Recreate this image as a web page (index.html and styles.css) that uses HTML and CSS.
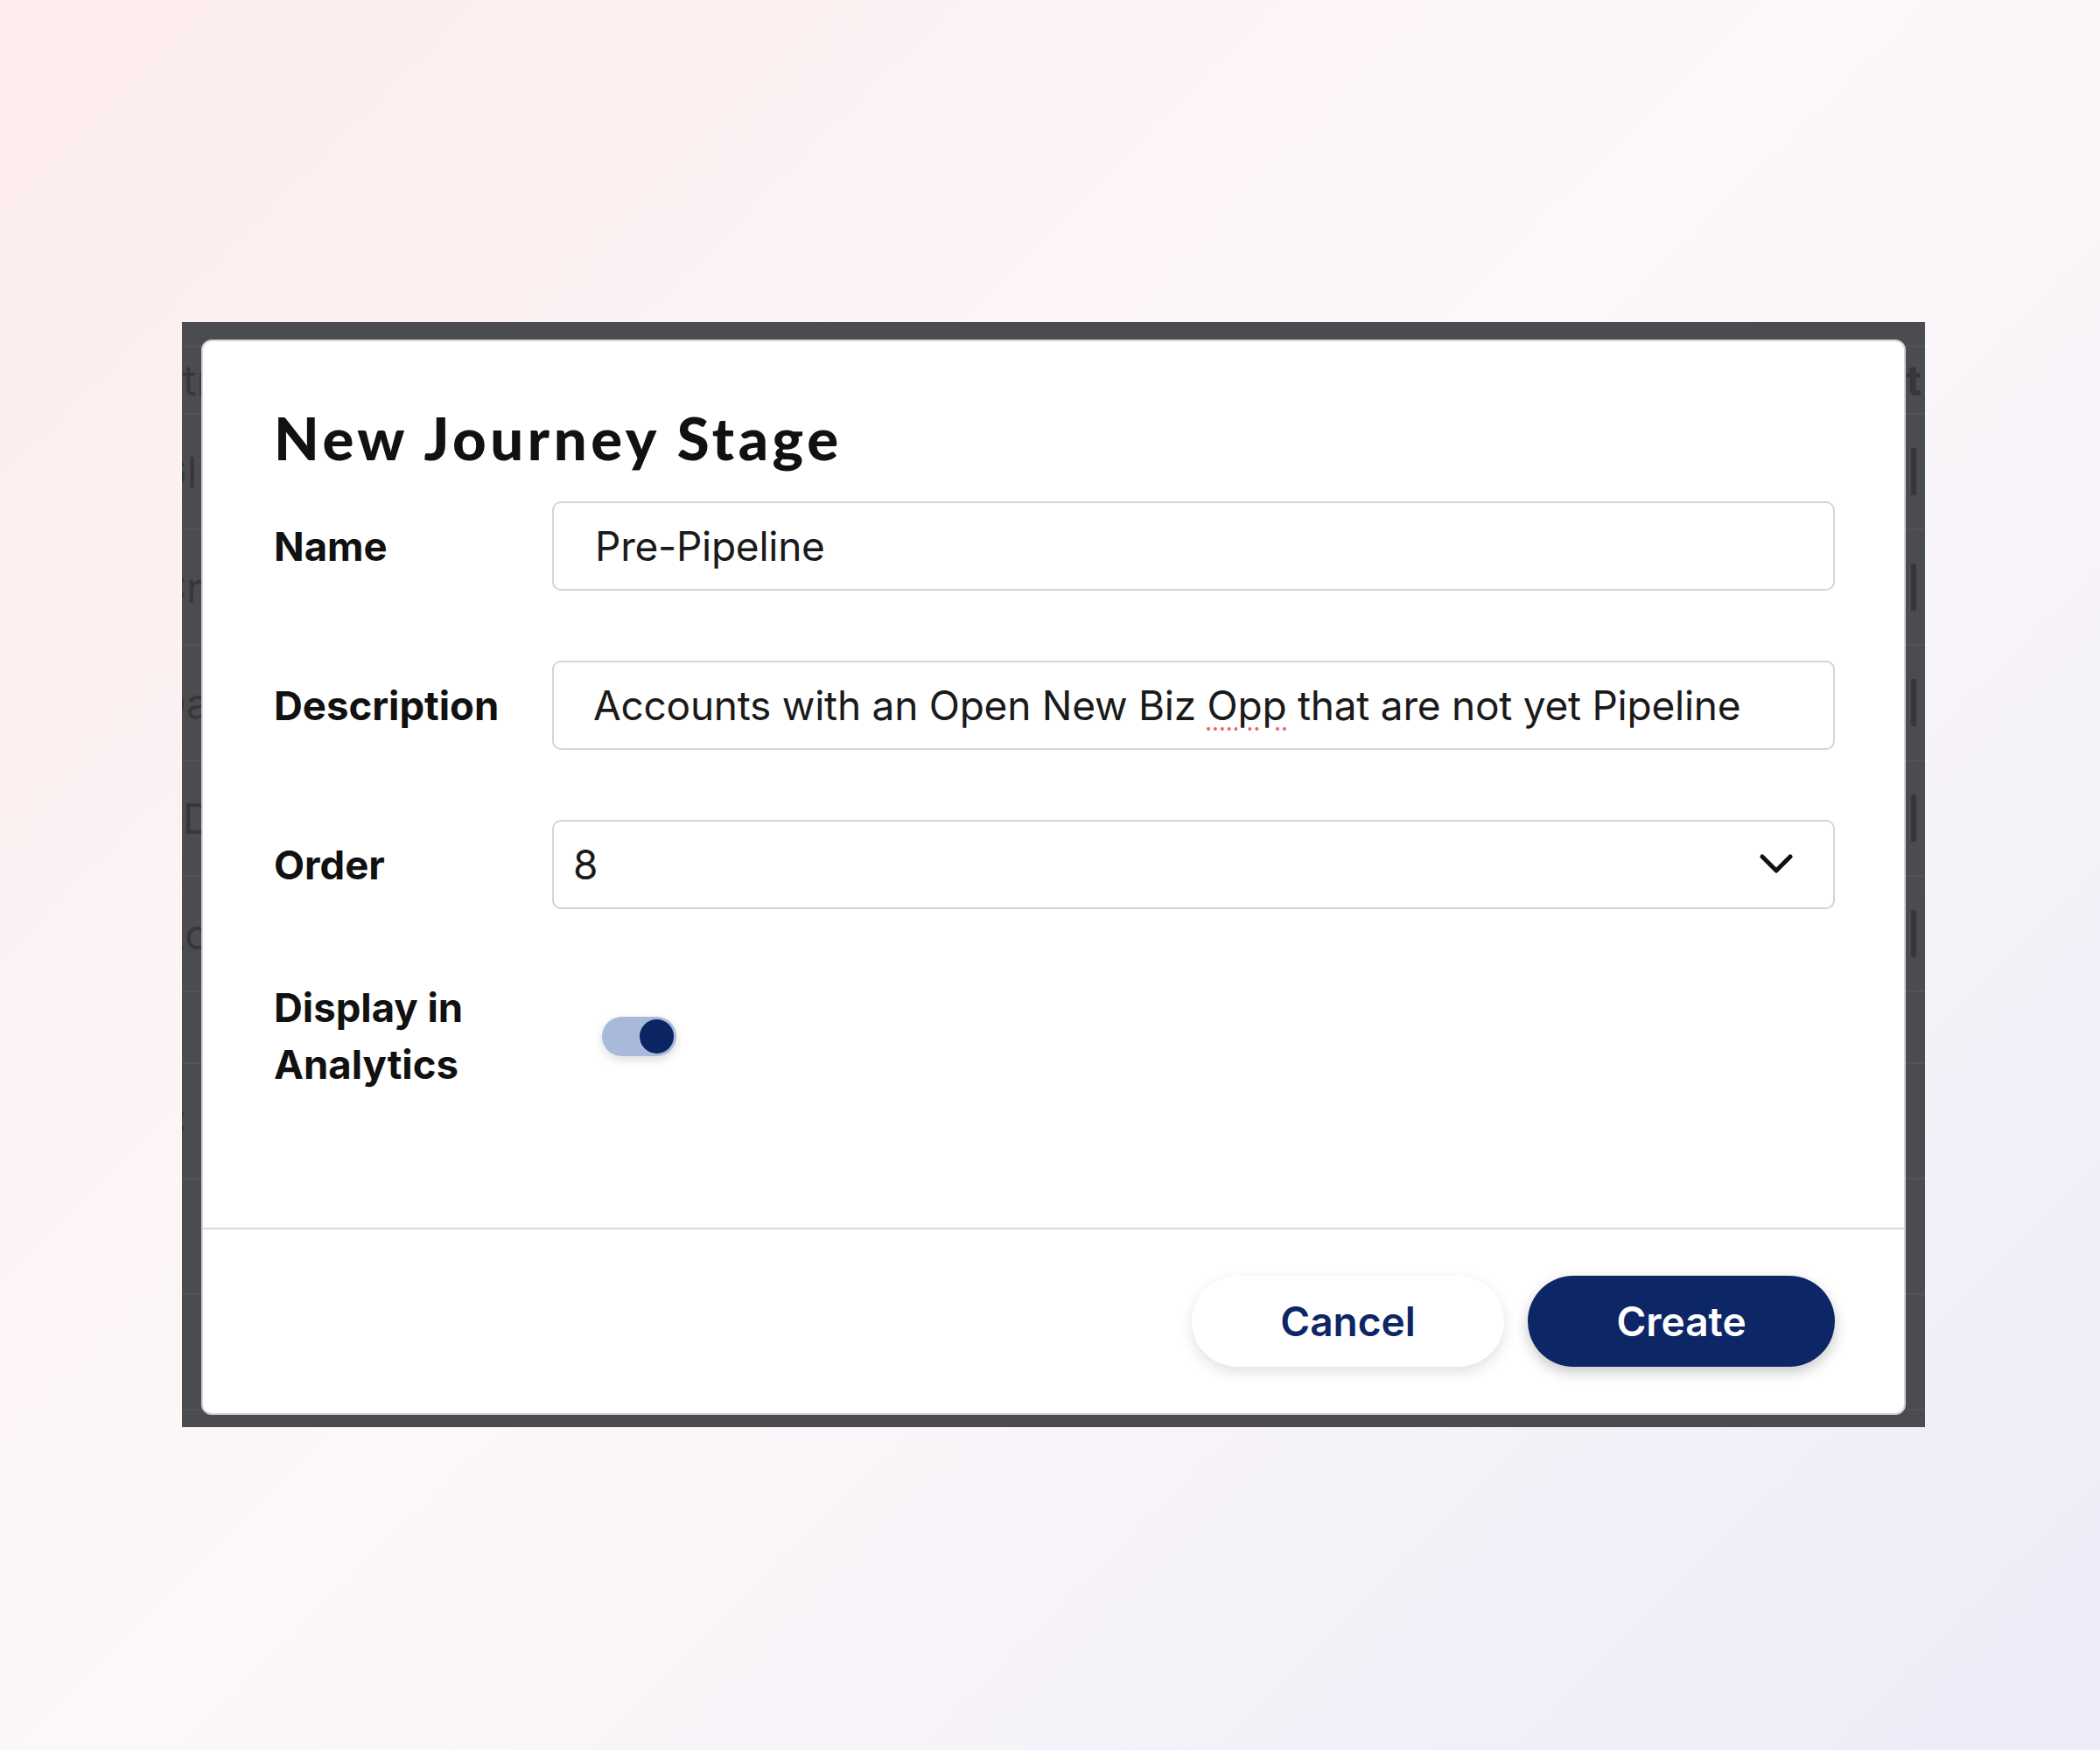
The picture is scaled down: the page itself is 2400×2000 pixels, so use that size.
FILE: index.html
```html
<!DOCTYPE html>
<html lang="en">
<head>
    <meta charset="UTF-8">
    <meta name="viewport" content="width=device-width, initial-scale=1.0">
    <title>New Journey Stage</title>
    <link rel="stylesheet" href="styles.css">
</head>
<body>
    <div class="screen">
        <!-- page behind the dimmed backdrop -->
        <div class="behind">
            <div class="row short"></div>
            <div class="row mid"><span class="cell">Str</span><span class="cell-r">t</span></div>
            <div class="row"><span class="cell">Gl</span><span class="cell-r bar"></span></div>
            <div class="row"><span class="cell">Cr</span><span class="cell-r bar"></span></div>
            <div class="row"><span class="cell">Da</span><span class="cell-r bar"></span></div>
            <div class="row"><span class="cell">SD</span><span class="cell-r bar"></span></div>
            <div class="row"><span class="cell">Ac</span><span class="cell-r bar"></span></div>
            <div class="row low"></div>
            <div class="row"><span class="cell">C</span></div>
            <div class="row"><span class="cell">1</span></div>
            <div class="row"><span class="cell">2</span></div>
        </div>

        <div class="modal">
            <div class="modal-body">
                <h1 class="modal-title">New Journey Stage</h1>
                <div class="form">
                    <label class="form-label">Name</label>
                    <div class="field name-field"><span>Pre-Pipeline</span></div>

                    <label class="form-label">Description</label>
                    <div class="field desc-field"><span>Accounts with an Open New Biz <span class="typo">Opp</span> that are not yet Pipeline</span></div>

                    <label class="form-label">Order</label>
                    <div class="field select-field">
                        <span>8</span>
                        <svg class="chevron" width="38" height="24" viewBox="0 0 38 24">
                            <path d="M3 3 L19 19 L35 3" fill="none" stroke="#111" stroke-width="5" stroke-linecap="round" stroke-linejoin="round"/>
                        </svg>
                    </div>

                    <label class="form-label">Display in Analytics</label>
                    <div class="toggle-cell">
                        <div class="toggle on"><div class="knob"></div></div>
                    </div>
                </div>
            </div>
            <div class="modal-footer">
                <button class="btn btn-cancel">Cancel</button>
                <button class="btn btn-create">Create</button>
            </div>
        </div>
    </div>
</body>
</html>
```

FILE: styles.css
```css
body {
    margin: 0;
    width: 2400px;
    height: 2000px;
    padding: 368px 0 0 208px;
    box-sizing: border-box;
    background: linear-gradient(135deg, #fdeced 0%, #fcf8f9 50%, #eeebf9 100%);
    font-family: Inter, 'Liberation Sans', sans-serif;
}
.screen {
    position: relative;
    width: 1992px;
    height: 1263px;
    background: #4b4c50;
    overflow: hidden;
}
.behind {
    display: flex;
    flex-direction: column;
}
.row {
    height: 130px;
    border-bottom: 2px solid #535458;
    display: flex;
    align-items: center;
    justify-content: space-between;
    font-size: 48px;
    color: #36373a;
}
.row.short { height: 27px; }
.row.mid { height: 75px; }
.row.low { height: 80px; }
.cell { margin-left: -30px; }
.cell-r { margin-right: 4px; font-weight: 700; }
.cell-r.bar {
    width: 6px;
    height: 54px;
    background: #36373a;
    margin-right: 10px;
}
.modal {
    position: absolute;
    left: 22px;
    top: 20px;
    right: 22px;
    bottom: 14px;
    background: #fff;
    border: 2px solid #d3d3d5;
    border-radius: 12px;
    display: flex;
    flex-direction: column;
}
.modal-body {
    flex: 1;
    padding: 70px 79px 0 81px;
}
.modal-title {
    margin: 0 0 33px;
    font-family: Lato, 'Liberation Sans', sans-serif;
    font-weight: 900;
    font-size: 67px;
    line-height: 80px;
    color: #111;
    letter-spacing: 4.6px;
}
.form {
    display: grid;
    grid-template-columns: 318px 1fr;
    row-gap: 80px;
    align-items: center;
}
.form-label {
    font-weight: 700;
    font-size: 45.5px;
    line-height: 65px;
    color: #111;
    width: 240px;
}
.field {
    height: 102px;
    box-sizing: border-box;
    border: 2px solid #d4d4d6;
    border-radius: 10px;
    display: flex;
    align-items: center;
    font-size: 46px;
    letter-spacing: -0.25px;
    color: #1a1a1a;
    white-space: nowrap;
}
.name-field { padding-left: 47px; }
.desc-field { padding-left: 45px; }
.typo {
    text-decoration: underline dotted #f0605a;
    text-decoration-thickness: 4px;
    text-underline-offset: 8px;
}
.select-field {
    padding: 0 46px 0 22px;
    justify-content: space-between;
}
.toggle-cell {
    padding-left: 57px;
}
.toggle {
    width: 85px;
    height: 45px;
    border-radius: 23px;
    background: #a9b9da;
    box-shadow: 0 4px 12px rgba(0,0,0,0.14);
    display: flex;
    align-items: center;
    justify-content: flex-end;
    padding-right: 3px;
    box-sizing: border-box;
}
.knob {
    width: 39px;
    height: 39px;
    border-radius: 50%;
    background: #0b2562;
}
.modal-footer {
    border-top: 2px solid #d9d9db;
    padding: 53px 79px 53px 0;
    display: flex;
    justify-content: flex-end;
    gap: 27px;
}
.btn {
    height: 104px;
    border: none;
    border-radius: 52px;
    font-family: Inter, 'Liberation Sans', sans-serif;
    font-size: 46px;
    font-weight: 600;
    cursor: pointer;
}
.btn-cancel {
    width: 357px;
    background: #fff;
    color: #0c2666;
    box-shadow: 0 6px 16px rgba(0,0,0,0.12);
}
.btn-create {
    width: 351px;
    background: #0c2666;
    color: #fff;
    box-shadow: 0 6px 16px rgba(0,0,0,0.22);
}
```
